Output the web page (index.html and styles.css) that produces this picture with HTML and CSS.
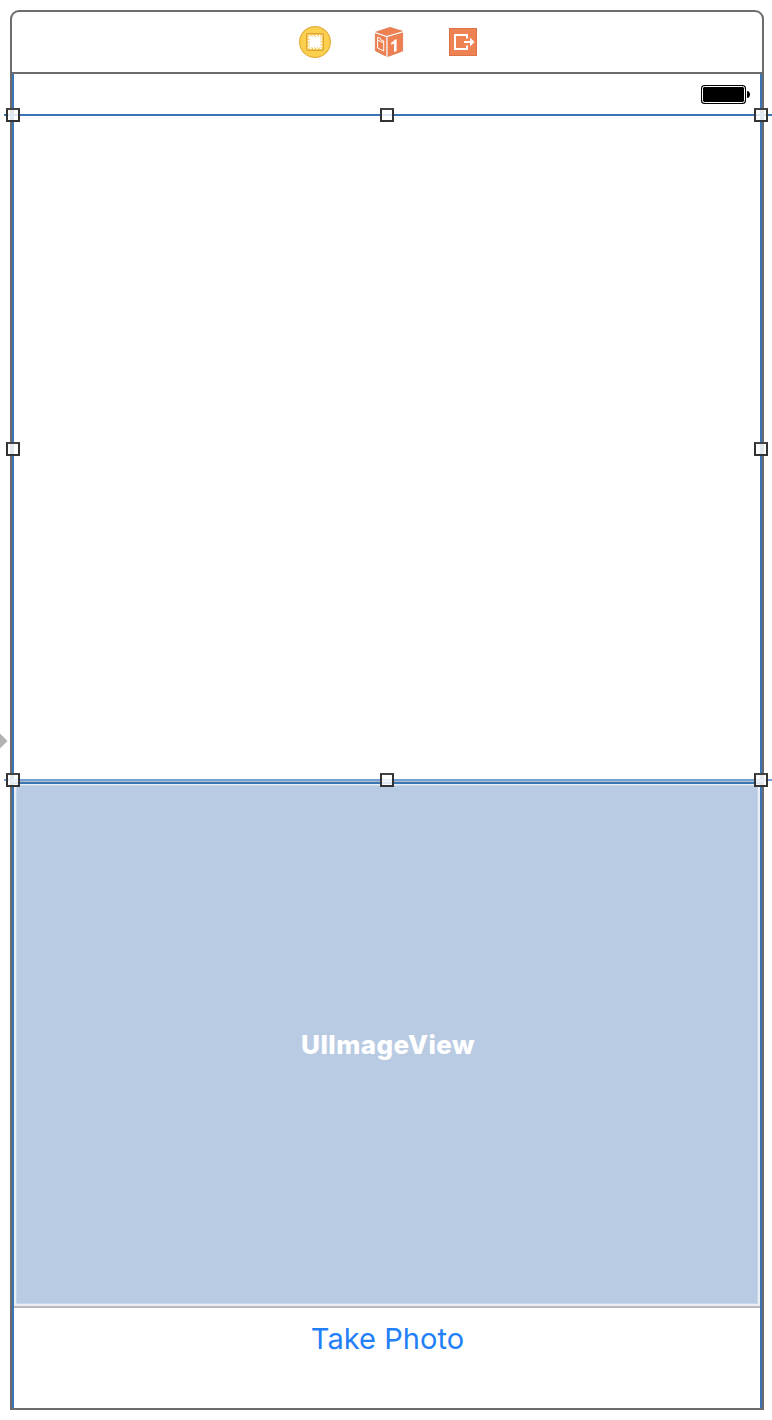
FILE: index.html
```html
<!DOCTYPE html>
<html lang="en">
<head>
<meta charset="utf-8">
<title>Storyboard</title>
<link rel="stylesheet" href="styles.css">
</head>
<body>
<main class="canvas">
  <section class="scene">
    <header class="dock">
      <svg class="icon" width="34" height="34" viewBox="0 0 34 34">
        <circle cx="17" cy="17" r="15.4" fill="#fbd04e" stroke="#e3af40" stroke-width="1.2"/>
        <rect x="8.500" y="8.500" width="17" height="17" rx=".5" fill="#f6c64c" stroke="#dda638"/>
        <rect x="11" y="11" width="12" height="12" fill="#fff"/>
        <rect x="10.500" y="10.500" width="13" height="13" fill="none" stroke="#fff" stroke-width="1.200" stroke-dasharray="2 1.250"/>
        <rect x="11.500" y="11.500" width="11" height="11" fill="none" stroke="#e6bd5e" stroke-width=".8" stroke-dasharray="1 1.750"/>
      </svg>
      <svg class="icon" width="34" height="34" viewBox="0 0 34 34">
        <path d="M18 2.400 30.600 6.300 15.500 11 3.400 7.300Z" fill="#ee8052" stroke="#d97449" stroke-width=".8"/>
        <path d="M3.400 8.200 14.500 12V31.300L3.400 25.700Z" fill="#ee8052" stroke="#d97449" stroke-width=".8"/>
        <path d="M15.700 12 30.600 7.300V26L15.700 31.500Z" fill="#ee8052" stroke="#d97449" stroke-width=".8"/>
        <path d="M3 7.600 14.800 11.600 31 6.700M14.900 12V31.800" fill="none" stroke="#fff" stroke-width="1.100"/>
        <path d="M5.600 12.300 8 13.200 9 15 11.700 16V26L5.600 23ZM6 15.300 11.500 17.700" fill="none" stroke="#fff" stroke-width="1"/>
        <path d="M19.200 17.600Q22 16.500 22.600 14.800L24.600 14.200V26L22 27V18.500L19.200 19.800Z" fill="#fff"/>
      </svg>
      <svg class="icon" width="34" height="34" viewBox="0 0 34 34">
        <rect x="3.500" y="3.500" width="27" height="27" fill="#ef8253" stroke="#d97449"/>
        <path d="M21 13.500V10H9V24H21V20.500" fill="none" stroke="#fff" stroke-width="2"/>
        <path d="M18 17H25" stroke="#fff" stroke-width="2"/>
        <path d="M24 12.500 28.500 17 24 21.500Z" fill="#fff"/>
      </svg>
    </header>
    <div class="screen">
      <div class="status">
        <svg width="49" height="19" viewBox="0 0 49 19">
          <rect width="45" height="19" rx="3.500" fill="#000"/>
          <rect x="1.500" y="1.500" width="42" height="16" rx="2" fill="none" stroke="#fff"/>
          <path d="M46 6C50 6 50 13 46 13Z" fill="#000"/>
        </svg>
      </div>
      <div class="preview"></div>
      <div class="image-view"><span class="label">UIImageView</span></div>
      <div class="footer"><span class="button">Take Photo</span></div>
    </div>
  </section>
  <i class="guide top"></i>
  <i class="guide bottom"></i>
  <i class="handle left top"></i><i class="handle center top"></i><i class="handle right top"></i>
  <i class="handle left middle"></i><i class="handle right middle"></i>
  <i class="handle left bottom"></i><i class="handle center bottom"></i><i class="handle right bottom"></i>
  <svg class="entry" width="8" height="16" viewBox="0 0 8 16"><path d="M0 .5 7.500 8 0 15.500Z" fill="#b2b2b2"/></svg>
</main>
</body>
</html>
```
FILE: styles.css
```css
*, *::after { box-sizing: border-box; }
body { margin: 0; background: #fff; font-family: Inter, "Liberation Sans", sans-serif; }
.canvas { position: relative; width: 772px; height: 1420px; padding: 10px; overflow: hidden; }
.scene { display: flex; flex-direction: column; width: 754px; height: 1400px; border: 2px solid #6c6c6c; border-radius: 9px 9px 0 0; }
.dock { display: flex; justify-content: center; gap: 40px; height: 62px; padding: 13px 0 0 4px; border-bottom: 2px solid #6c6c6c; }
.icon { display: block; }
.screen { display: flex; flex: 1; flex-direction: column; border: solid #3975b5; border-width: 0 2px; }
.status { display: flex; justify-content: flex-end; height: 41px; padding: 11px 10px 0 0; }
.preview { height: 668px; }
.image-view { display: flex; align-items: center; justify-content: center; height: 523px; border: 2px solid #ebeff4; background: #b9cbe3; box-shadow: inset 0 0 0 1px #c7d6ea; color: #fff; }
.label { margin: 1px 0 0 2px; font-size: 26px; line-height: 32px; font-weight: 800; letter-spacing: .45px; }
.footer { flex: 1; border-top: 2px solid #bababa; padding-top: 12px; text-align: center; }
.button { color: #237ff7; font-size: 29px; line-height: 38px; letter-spacing: .06px; padding-left: 1px; }
.guide { position: absolute; left: 4px; right: 0; height: 2px; background: #3975b5; }
.guide.top { top: 114px; }
.guide.bottom { top: 779px; background: #70a0d7; }
.guide.bottom::after { content: ""; position: absolute; left: 8px; right: 10px; top: 2px; height: 3px; background: #3975b5; border-top: 1px solid #b9bdc2; }
.handle { position: absolute; width: 14px; height: 14px; border: 2px solid #333; border-top-color: #444; background: rgba(255, 255, 255, .84); }
.handle.left { left: 6px; }
.handle.center { left: 380px; }
.handle.right { left: 754px; }
.handle.top { top: 108px; }
.handle.middle { top: 442px; }
.handle.bottom { top: 773px; }
.entry { position: absolute; left: 0; top: 733px; }
```
